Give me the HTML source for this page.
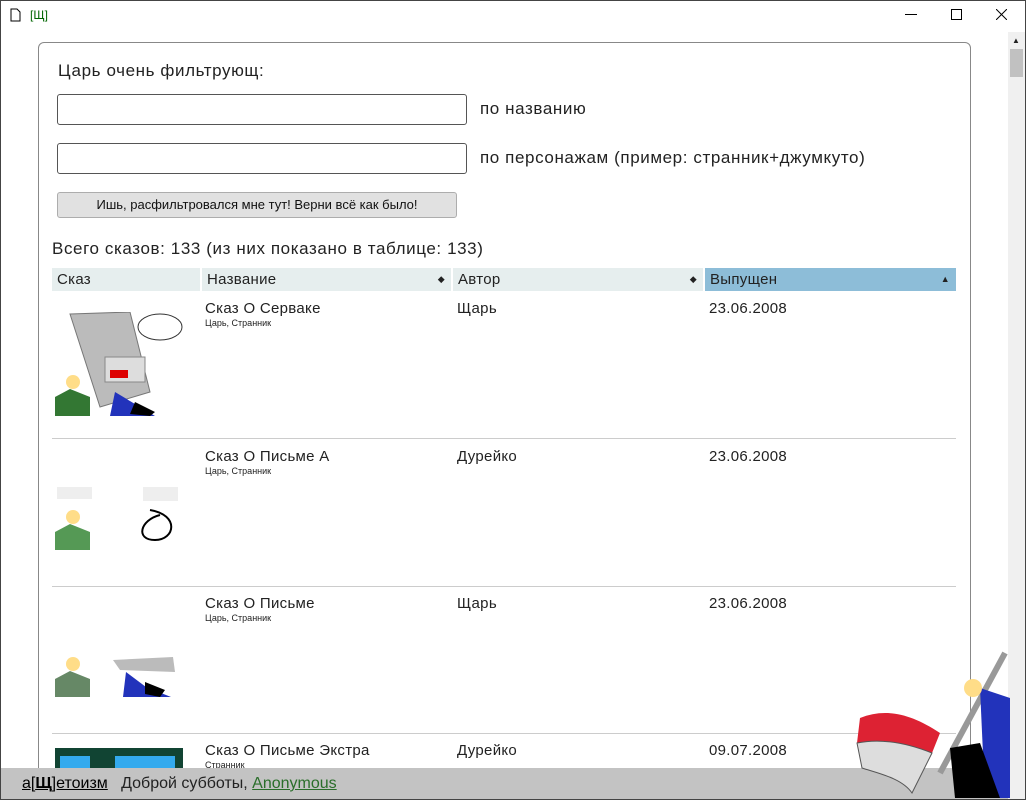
<!DOCTYPE html>
<html><head><meta charset="utf-8"><style>
*{box-sizing:border-box;margin:0;padding:0}
html,body{width:1026px;height:800px;overflow:hidden}
body{background:#fff;font-family:"Liberation Sans","DejaVu Sans",sans-serif;color:#222;position:relative}
.frame{position:absolute;left:0;top:0;width:1026px;height:800px;border:1px solid #444;pointer-events:none;z-index:5}
.title .t{position:absolute;left:30px;top:8px;font-size:12px;color:#060}
.sb{position:absolute;left:1008px;top:32px;width:17px;height:767px;background:#f0f0f0}
.thumb{position:absolute;left:1010px;top:49px;width:13px;height:28px;background:#c1c1c1}
.panel{position:absolute;left:38px;top:42px;width:933px;height:740px;border:1px solid #888;border-radius:6px}
.abs{position:absolute}
.big{font-size:17px;letter-spacing:0.6px}
input{position:absolute;height:31px;border:1px solid #555;border-radius:3px;background:#fff}
.btn{position:absolute;left:57px;top:192px;width:400px;height:26px;border:1px solid #adadad;background:#e1e1e1;border-radius:3px;font-size:13px;text-align:center;line-height:24px;color:#111}
.hd{position:absolute;top:268px;height:23px;background:#e6eeee;font-size:15px;letter-spacing:0.3px;line-height:23px;padding-left:5px}
.hd.s{background:#8dbdd8}
.ar{position:absolute;right:6px;top:0;font-size:9px}
.row{position:absolute;left:52px;width:904px;height:147px;border-bottom:1px solid #ccc}
.row .n{position:absolute;left:153px;top:8px;font-size:15px;letter-spacing:0.3px}
.row .c{position:absolute;left:153px;top:26px;font-size:9px}
.row .a{position:absolute;left:405px;top:8px;font-size:15px;letter-spacing:0.3px}
.row .d{position:absolute;left:657px;top:8px;font-size:15px;letter-spacing:0.3px}
.img{position:absolute;left:3px;width:128px}
.foot{position:absolute;left:1px;top:768px;width:1007px;height:31px;background:#c3c3c3;font-size:16px;line-height:31px;padding-left:21px}
</style></head><body>
<div class="frame"></div>
<div class="title"><svg class="abs" style="left:10px;top:8px" width="11" height="14"><path d="M1 1h6l3 3v9H1z" fill="#fff" stroke="#000"/></svg><span class="t">[Щ]</span>
<svg class="abs" style="left:905px;top:14px" width="12" height="2"><rect width="12" height="1" fill="#000"/></svg>
<svg class="abs" style="left:951px;top:9px" width="11" height="11"><rect x=".5" y=".5" width="10" height="10" fill="none" stroke="#000"/></svg>
<svg class="abs" style="left:996px;top:9px" width="11" height="11"><path d="M0 0L11 11M11 0L0 11" stroke="#000"/></svg>
</div>
<div class="sb"><div style="position:absolute;left:4px;top:4px;font-size:8px">▲</div></div><div class="thumb"></div>
<div class="panel"></div>
<div class="abs big" style="left:58px;top:61px">Царь очень фильтрующ:</div>
<input style="left:57px;top:94px;width:410px">
<div class="abs big" style="left:480px;top:99px">по названию</div>
<input style="left:57px;top:143px;width:410px">
<div class="abs big" style="left:480px;top:148px">по персонажам (пример: странник+джумкуто)</div>
<div class="btn">Ишь, расфильтровался мне тут! Верни всё как было!</div>
<div class="abs big" style="left:52px;top:239px">Всего сказов: 133 (из них показано в таблице: 133)</div>
<div class="hd" style="left:52px;width:148px">Сказ</div>
<div class="hd" style="left:202px;width:249px">Название<span class="ar">◆</span></div>
<div class="hd" style="left:453px;width:250px">Автор<span class="ar">◆</span></div>
<div class="hd s" style="left:705px;width:251px">Выпущен<span class="ar">▲</span></div>

<div class="row" style="top:292px"><svg class="img" style="top:20px" height="104"><polygon points="15,2 75,0 95,80 45,95" fill="#bbb" stroke="#777"/><rect x="50" y="45" width="40" height="25" fill="#ddd" stroke="#888"/><rect x="55" y="58" width="18" height="8" fill="#d00"/><ellipse cx="105" cy="15" rx="22" ry="13" fill="#fff" stroke="#333"/><path d="M0 104V85l15-8 20 8v19z" fill="#373"/><circle cx="18" cy="70" r="7" fill="#fd8"/><path d="M55 104L60 80l25 15 15 9z" fill="#23b"/><path d="M80 90l20 10-5 4-20-2z" fill="#000"/></svg><div class="n">Сказ О Серваке</div><div class="c">Царь, Странник</div><div class="a">Щарь</div><div class="d">23.06.2008</div></div>
<div class="row" style="top:440px"><svg class="img" style="top:45px" height="65"><path d="M0 65V47l15-8 20 8v18z" fill="#595"/><circle cx="18" cy="32" r="7" fill="#fd8"/><path d="M95 25c30 5 25 30 5 30s-15-20 5-25" fill="none" stroke="#000" stroke-width="2"/><rect x="2" y="2" width="35" height="12" fill="#eee"/><rect x="88" y="2" width="35" height="14" fill="#eee"/></svg><div class="n">Сказ О Письме А</div><div class="c">Царь, Странник</div><div class="a">Дурейко</div><div class="d">23.06.2008</div></div>
<div class="row" style="top:587px"><svg class="img" style="top:45px" height="65"><path d="M0 65V47l15-8 20 8v18z" fill="#686"/><circle cx="18" cy="32" r="7" fill="#fd8"/><polygon points="58,28 118,25 120,40 65,38" fill="#bbb"/><path d="M68 65l3-25 20 15 25 10z" fill="#23b"/><path d="M90 50l20 8-5 7-15-3z" fill="#000"/></svg><div class="n">Сказ О Письме</div><div class="c">Царь, Странник</div><div class="a">Щарь</div><div class="d">23.06.2008</div></div>
<div class="row" style="top:734px;border:none"><svg class="img" style="top:14px" height="20"><rect width="128" height="20" fill="#143"/><rect x="5" y="8" width="30" height="12" fill="#3ae"/><rect x="60" y="8" width="60" height="12" fill="#3ae"/></svg><div class="n">Сказ О Письме Экстра</div><div class="c">Странник</div><div class="a">Дурейко</div><div class="d">09.07.2008</div></div>

<div class="foot"><u style="color:#000">а[<b>Щ</b>]етоизм</u>&nbsp;&nbsp; Доброй субботы, <u style="color:#2a6e2a">Anonymous</u></div>
<svg class="abs" style="left:855px;top:648px" width="155" height="152">
<path d="M150 5L85 125" stroke="#999" stroke-width="6"/>
<path d="M5 70c25-10 50-5 80 15l-8 20c-25-10-50-15-75-10z" fill="#d23"/>
<path d="M2 95c25-5 50 0 75 10l-20 40c-10-15-35-20-50-25z" fill="#ddd" stroke="#555"/>
<path d="M125 40l30 10v100h-25z" fill="#23b"/>
<circle cx="118" cy="40" r="9" fill="#fd8"/>
<path d="M95 100l30-5 20 55h-45z" fill="#000"/>
</svg>
</body></html>
